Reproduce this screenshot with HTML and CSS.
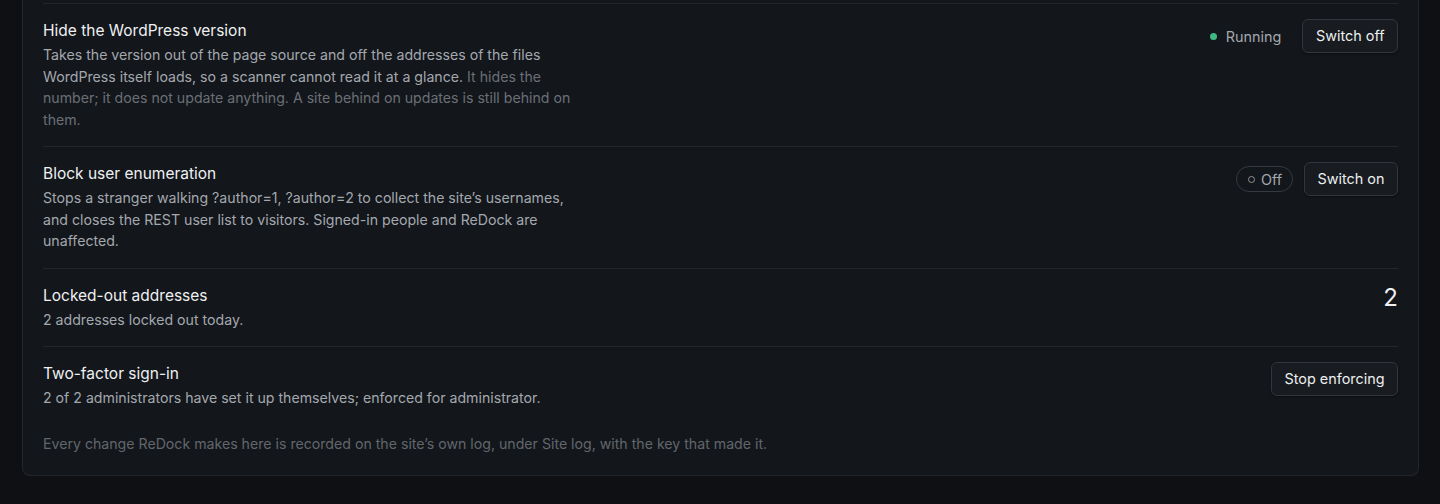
FILE: index.html
```html
<!DOCTYPE html>
<html lang="en">
<head>
<meta charset="utf-8">
<title>Security settings</title>
<link rel="stylesheet" href="styles.css">
</head>
<body>
<section class="card">
  <div class="row">
    <div class="info">
      <h3 class="title">Hide the WordPress version</h3>
      <p class="desc">Takes the version out of the page source and off the addresses of the files WordPress itself loads, so a scanner cannot read it at a glance. <span class="dim">It hides the number; it does not update anything. A site behind on updates is still behind on them.</span></p>
    </div>
    <div class="actions">
      <span class="status"><span class="dot"></span>Running</span>
      <button class="btn">Switch off</button>
    </div>
  </div>
  <div class="row">
    <div class="info">
      <h3 class="title">Block user enumeration</h3>
      <p class="desc">Stops a stranger walking ?author=1, ?author=2 to collect the site’s usernames, and closes the REST user list to visitors. Signed-in people and ReDock are unaffected.</p>
    </div>
    <div class="actions">
      <span class="pill"><span class="ring"></span>Off</span>
      <button class="btn">Switch on</button>
    </div>
  </div>
  <div class="row">
    <div class="info">
      <h3 class="title">Locked-out addresses</h3>
      <p class="desc">2 addresses locked out today.</p>
    </div>
    <div class="actions">
      <span class="count">2</span>
    </div>
  </div>
  <div class="row">
    <div class="info">
      <h3 class="title">Two-factor sign-in</h3>
      <p class="desc">2 of 2 administrators have set it up themselves; enforced for administrator.</p>
    </div>
    <div class="actions">
      <button class="btn">Stop enforcing</button>
    </div>
  </div>
  <p class="footer">Every change ReDock makes here is recorded on the site’s own log, under Site log, with the key that made it.</p>
</section>
</body>
</html>
```

FILE: styles.css
```css
* { box-sizing: border-box; }
html, body { margin: 0; padding: 0; }
body {
  background: #0e1013;
  font-family: "Inter", "Noto Sans", sans-serif;
  color: #e8eaed;
  height: 504px;
  overflow: hidden;
}
.card {
  margin: 0 21px 0 22px;
  background: #13161a;
  border: 1px solid #23272c;
  border-top: none;
  border-radius: 0 0 8px 8px;
  padding: 3px 20px 20px;
}
.row {
  display: flex;
  justify-content: space-between;
  align-items: flex-start;
  gap: 24px;
  padding: 16px 0;
  border-top: 1px solid #23272c;
}
.info { max-width: 545px; }
.title {
  margin: 0 0 2px;
  font-size: 15.5px;
  line-height: 22px;
  font-weight: 400;
  color: #eef0f2;
}
.desc {
  margin: 0;
  font-size: 14.15px;
  line-height: 21.5px;
  color: #a3a8af;
}
.dim { color: #6a6f77; }
.actions {
  display: flex;
  align-items: center;
  gap: 11px;
  margin-top: -1px;
}
.status {
  display: flex;
  align-items: center;
  gap: 9px;
  font-size: 14.4px;
  color: #a3a8af;
  margin-right: 10px;
}
.dot {
  width: 7px; height: 7px;
  border-radius: 50%;
  background: #3fb984;
}
.pill {
  display: flex;
  align-items: center;
  gap: 6px;
  height: 26px;
  padding: 0 10px 0 11px;
  border: 1px solid #353a40;
  border-radius: 999px;
  font-size: 14.4px;
  color: #a3a8af;
}
.ring {
  width: 7px; height: 7px;
  border-radius: 50%;
  border: 1.3px solid #8d9299;
}
.btn {
  font-family: inherit;
  font-size: 14.4px;
  line-height: 18px;
  color: #eceef0;
  background: #181b1f;
  border: 1px solid #32373d;
  border-radius: 6px;
  padding: 7px 12.5px;
  box-shadow: 0 1px 2px rgba(0,0,0,0.4);
}
.count {
  font-size: 24px;
  line-height: 24px;
  color: #eef0f2;
  margin-top: 2px;
}
.footer {
  margin: 0;
  padding-top: 8px;
  font-size: 14.15px;
  line-height: 22px;
  color: #61666d;
}
```
